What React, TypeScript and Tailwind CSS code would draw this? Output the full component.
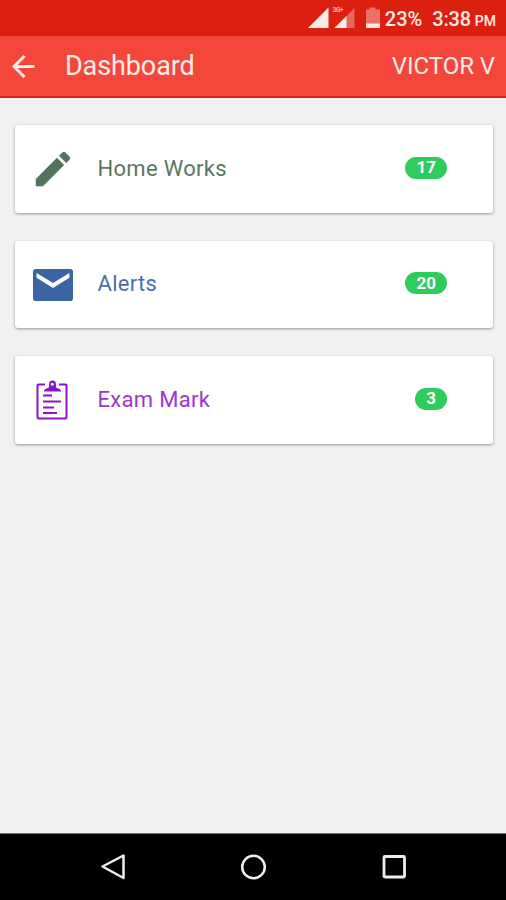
import type { ReactNode } from "react";

function StatusBar() {
  return (
    <div className="flex h-9 items-center justify-end bg-[#db2010] pr-[10px] text-[#fde9e6]">
      {/* Signal strength and battery */}
      <svg className="h-9 w-[76px]" viewBox="0 0 76 36">
        <path d="M1 28L21.500 7.500V28z" fill="#fde9e6" />
        <path d="M27.500 28L47.500 8V28z" fill="#e8685c" />
        <path d="M27.500 28L39.500 16V28z" fill="#fde9e6" />
        <text x="25.500" y="12" fontSize="7" fontWeight="700" fill="#f3b0a9" fontFamily="Roboto, sans-serif" textLength="11">
          3G+
        </text>
        <path d="M62.500 7.500h6v2h3.500q1 0 1 1V27q0 1-1 1h-12q-1 0-1-1V10.500q0-1 1-1h2.500z" fill="#ea7167" />
        <path d="M59 23.500h14V27q0 1-1 1h-12q-1 0-1-1z" fill="#fde9e6" />
      </svg>
      <span className="ml-[2px] pt-[2px] text-[20px] leading-[34px] font-medium">23%</span>
      <span className="ml-[10px] pt-[2px] text-[20px] leading-[34px] font-medium tracking-[-0.2px]">3:38</span>
      <span className="ml-[4px] pt-[5px] text-[14px] leading-8 font-medium">PM</span>
    </div>
  );
}

function Header() {
  return (
    <header className="flex h-[62px] items-center border-b-2 border-[#db2414] bg-[#f2473a] pr-[11px] pl-3 text-[#ffece9]">
      <svg className="h-6 w-6" viewBox="0 0 24 24" fill="none" stroke="currentColor" strokeWidth="3">
        <path d="M22.500 12.500H2M12.500 2L2 12.500l10.500 10.500" />
      </svg>
      <h1 className="ml-[29px] text-[27px] leading-8 tracking-[-0.1px]">Dashboard</h1>
      <span className="ml-auto text-[24px] leading-8 tracking-[-0.05px]">VICTOR V</span>
    </header>
  );
}

function PencilIcon() {
  return (
    <svg className="h-[46px] w-[46px]" viewBox="0 0 24 24" fill="#55735a">
      <path d="M3 17.250V21h3.750L17.810 9.940l-3.750-3.750L3 17.250zM20.710 7.040a1 1 0 0 0 0-1.410l-2.340-2.340a1 1 0 0 0-1.410 0l-1.830 1.830 3.750 3.750 1.830-1.830z" />
    </svg>
  );
}

function MailIcon() {
  return (
    <svg className="mt-px h-[48px] w-[48px]" viewBox="0 0 24 24" fill="#3a65a2">
      <path d="M20.600 4H3.400A1.400 1.400 0 0 0 2 5.400v13.200A1.400 1.400 0 0 0 3.400 20h17.200a1.400 1.400 0 0 0 1.400-1.400V5.400A1.400 1.400 0 0 0 20.600 4zm-.4 4.400L12 13.500 3.800 8.400V6l8.200 5 8.200-5v2.400z" />
    </svg>
  );
}

function ClipboardIcon() {
  return (
    <svg className="mr-px h-[40px] w-[32px]" viewBox="0 0 32 40" fill="none" stroke="#8d12c4">
      <path d="M9 4.500H2.500Q1.500 4.500 1.500 5.500V37.500Q1.500 38.500 2.500 38.500H29.500Q30.500 38.500 30.500 37.500V5.500Q30.500 4.500 29.500 4.500H23" strokeWidth="2" />
      <path
        d="M8 11.500q0-3 4-3.500c1.500-.5 1-2 1-3.500a3.500 4 0 0 1 7 0c0 1.500-.5 3 1 3.500q4 .5 4 3.500zM16.300 2.800a1.500 1.500 0 1 0 .01 0z"
        fill="#8d12c4"
        fillRule="evenodd"
        stroke="none"
      />
      <path d="M7 15.500h9M7 21.500h18M7 27.500h11M7 33h14" strokeWidth="2" />
    </svg>
  );
}

type CardProps = {
  icon: ReactNode;
  label: string;
  count: number;
  color: string;
};

function Card({ icon, label, count, color }: CardProps) {
  return (
    <div className="flex h-[87.500px] items-center rounded-[3px] bg-white pr-[46px] pl-[14px] shadow-[0_1px_3px_rgba(0,0,0,0.38)]">
      <div className="flex w-[48px] justify-center">{icon}</div>
      <span className={`ml-[21px] text-[22px] leading-8 tracking-[0.3px] ${color}`}>{label}</span>
      <span className="mb-[2px] ml-auto flex h-[22px] items-center rounded-full bg-[#2fcb5d] px-[11px] text-[17px] font-bold text-white">
        {count}
      </span>
    </div>
  );
}

function NavBar() {
  return (
    <nav className="flex h-[67px] items-center justify-between border-t border-[#777] bg-black px-[99px]">
      <svg className="h-7 w-7" viewBox="0 0 28 28" fill="none" stroke="#eee" strokeWidth="2.500" strokeLinejoin="round">
        <path d="M24.500 2.500V25L3.500 13.500z" />
      </svg>
      <svg className="h-7 w-7" viewBox="0 0 28 28" fill="none" stroke="#eee" strokeWidth="2.500">
        <circle cx="14.500" cy="14" r="11.300" />
      </svg>
      <svg className="h-7 w-7" viewBox="0 0 28 28" fill="none" stroke="#eee" strokeWidth="2.800">
        <rect x="5" y="3.500" width="20.500" height="20.500" rx="1" />
      </svg>
    </nav>
  );
}

export default function App() {
  return (
    <div className="flex h-[900px] w-[506px] flex-col overflow-hidden bg-[#f1f1f1] font-['Roboto',sans-serif]">
      <StatusBar />
      <Header />
      <main className="flex flex-1 flex-col gap-[28px] pt-[27.200px] pr-[13px] pl-[14.500px]">
        <Card icon={<PencilIcon />} label="Home Works" count={17} color="text-[#5a785e]" />
        <Card icon={<MailIcon />} label="Alerts" count={20} color="text-[#4a70a9]" />
        <Card icon={<ClipboardIcon />} label="Exam Mark" count={3} color="text-[#a035d2]" />
      </main>
      <NavBar />
    </div>
  );
}
